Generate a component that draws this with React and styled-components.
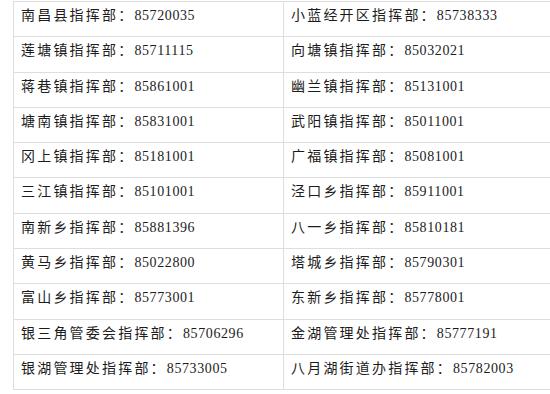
import React from "react";
import styled, { createGlobalStyle } from "styled-components";

const GlobalStyle = createGlobalStyle`
  html, body {
    margin: 0;
    padding: 0;
    background: #ffffff;
    overflow: hidden;
  }
`;

const Page = styled.div`
  padding: 1px 0 0 13px;
  width: 550px;
  height: 394px;
  box-sizing: border-box;
`;

const Grid = styled.div`
  display: grid;
  grid-template-columns: 270px 270px;
  border-top: 1px solid #dedede;
  width: 540px;
`;

const Cell = styled.div`
  box-sizing: border-box;
  height: 35.3px;
  padding: 5px 0 0 7px;
  border-left: 1px solid #dedede;
  border-bottom: 1px solid #dedede;
  font-family: "Liberation Serif", "Noto Sans CJK SC", serif;
  font-size: 14px;
  line-height: 18px;
  color: #1c1c1c;
  white-space: nowrap;
`;

const Label = styled.span`
  letter-spacing: 2.2px;
`;

const Phone = styled.span`
  letter-spacing: 0.6px;
`;

const rows = [
  ["南昌县指挥部：", "85720035", "小蓝经开区指挥部：", "85738333"],
  ["莲塘镇指挥部：", "85711115", "向塘镇指挥部：", "85032021"],
  ["蒋巷镇指挥部：", "85861001", "幽兰镇指挥部：", "85131001"],
  ["塘南镇指挥部：", "85831001", "武阳镇指挥部：", "85011001"],
  ["冈上镇指挥部：", "85181001", "广福镇指挥部：", "85081001"],
  ["三江镇指挥部：", "85101001", "泾口乡指挥部：", "85911001"],
  ["南新乡指挥部：", "85881396", "八一乡指挥部：", "85810181"],
  ["黄马乡指挥部：", "85022800", "塔城乡指挥部：", "85790301"],
  ["富山乡指挥部：", "85773001", "东新乡指挥部：", "85778001"],
  ["银三角管委会指挥部：", "85706296", "金湖管理处指挥部：", "85777191"],
  ["银湖管理处指挥部：", "85733005", "八月湖街道办指挥部：", "85782003"],
];

export default function App() {
  return (
    <Page>
      <GlobalStyle />
      <Grid>
        {rows.map(([a, an, b, bn]) => (
          <React.Fragment key={a}>
            <Cell>
              <Label>{a}</Label>
              <Phone>{an}</Phone>
            </Cell>
            <Cell>
              <Label>{b}</Label>
              <Phone>{bn}</Phone>
            </Cell>
          </React.Fragment>
        ))}
      </Grid>
    </Page>
  );
}
